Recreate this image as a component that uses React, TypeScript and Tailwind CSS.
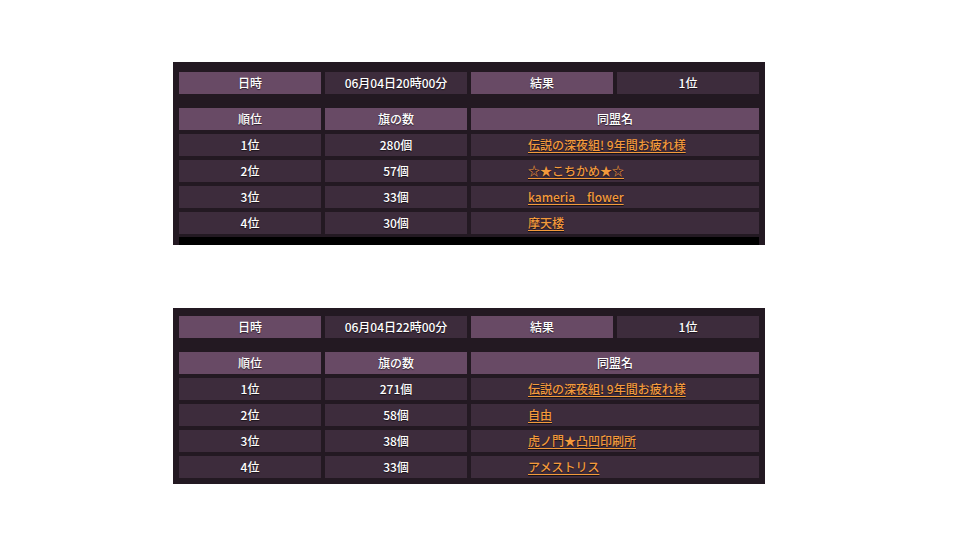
import type { ReactNode } from "react";

type Row = { rank: string; flags: string; name: string };

type Battle = {
  time: string;
  result: string;
  rows: Row[];
};

const battles: Battle[] = [
  {
    time: "06月04日20時00分",
    result: "1位",
    rows: [
      { rank: "1位", flags: "280個", name: "伝説の深夜組! 9年間お疲れ様" },
      { rank: "2位", flags: "57個", name: "☆★こちかめ★☆" },
      { rank: "3位", flags: "33個", name: "kameria　flower" },
      { rank: "4位", flags: "30個", name: "摩天楼" },
    ],
  },
  {
    time: "06月04日22時00分",
    result: "1位",
    rows: [
      { rank: "1位", flags: "271個", name: "伝説の深夜組! 9年間お疲れ様" },
      { rank: "2位", flags: "58個", name: "自由" },
      { rank: "3位", flags: "38個", name: "虎ノ門★凸凹印刷所" },
      { rank: "4位", flags: "33個", name: "アメストリス" },
    ],
  },
];

const Head = ({ children, className = "" }: { children: ReactNode; className?: string }) => (
  <div
    className={`h-[22px] bg-[#684a65] flex items-center justify-center text-white [text-shadow:0_1px_1px_rgba(0,0,0,0.6)] ${className}`}
  >
    {children}
  </div>
);

const Cell = ({ children, className = "" }: { children: ReactNode; className?: string }) => (
  <div
    className={`h-[22px] bg-[#3d2c3c] flex items-center justify-center text-white [text-shadow:0_1px_1px_rgba(0,0,0,0.6)] ${className}`}
  >
    {children}
  </div>
);

const BattleTable = ({ battle, last }: { battle: Battle; last?: boolean }) => (
  <div
    className={`w-[592px] bg-[#231922] px-[6px] text-[12px] leading-none font-medium ${
      last ? "pt-[8px] pb-[6px]" : "pt-[10px] pb-0"
    }`}
  >
    <div className="grid grid-cols-4 gap-x-[4px]">
      <Head>日時</Head>
      <Cell className="bg-[#3a2a38]">{battle.time}</Cell>
      <Head>結果</Head>
      <Cell className="bg-[#3a2a38]">{battle.result}</Cell>
    </div>
    <div className="grid grid-cols-4 gap-x-[4px] gap-y-[4px] mt-[14px]">
      <Head>順位</Head>
      <Head>旗の数</Head>
      <Head className="col-span-2">同盟名</Head>
      {battle.rows.map((r) => (
        <div key={r.rank} className="contents">
          <Cell>{r.rank}</Cell>
          <Cell>{r.flags}</Cell>
          <Cell className="col-span-2 !justify-start pl-[57px]">
            <a href="#" className="text-[#f39a3c] underline underline-offset-2">
              {r.name}
            </a>
          </Cell>
        </div>
      ))}
    </div>
    {!last && <div className="h-[8px] mt-[3px] bg-black" />}
  </div>
);

export default function App() {
  return (
    <div
      className="w-[960px] h-[540px] bg-white overflow-hidden"
      style={{ fontFamily: '"Noto Sans CJK JP", "Noto Sans", sans-serif' }}
    >
      <div className="flex flex-col pl-[173px] pt-[62px] gap-[63px]">
        <BattleTable battle={battles[0]} />
        <BattleTable battle={battles[1]} last />
      </div>
    </div>
  );
}
